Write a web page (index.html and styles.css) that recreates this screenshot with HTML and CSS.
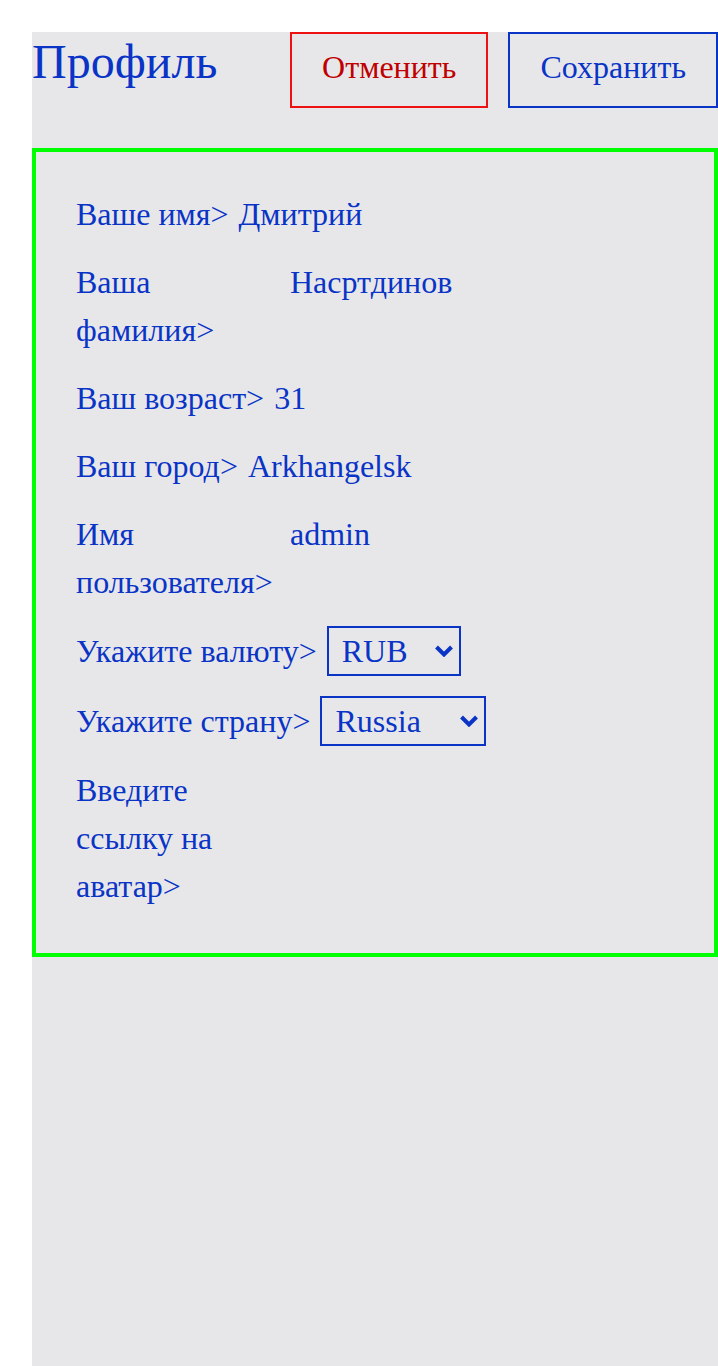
FILE: index.html
```html
<!DOCTYPE html>
<html lang="ru">
<head>
<meta charset="utf-8">
<title>Профиль</title>
<link rel="stylesheet" href="styles.css">
</head>
<body>
<main class="page">
  <header class="header">
    <h1 class="title">Профиль</h1>
    <div class="actions">
      <button class="btn btn-cancel">Отменить</button>
      <button class="btn btn-save">Сохранить</button>
    </div>
  </header>
  <section class="card">
    <div class="row"><span class="label">Ваше имя&gt;</span><span class="value">Дмитрий</span></div>
    <div class="row"><span class="label">Ваша фамилия&gt;</span><span class="value">Насртдинов</span></div>
    <div class="row"><span class="label">Ваш возраст&gt;</span><span class="value">31</span></div>
    <div class="row"><span class="label">Ваш город&gt;</span><span class="value">Arkhangelsk</span></div>
    <div class="row"><span class="label">Имя пользователя&gt;</span><span class="value">admin</span></div>
    <div class="row row-select">
      <span class="label">Укажите валюту&gt;</span>
      <span class="select-wrap">
        <select class="select select-currency"><option>RUB</option></select>
        <svg class="chevron" width="20" height="12" viewBox="0 0 20 12" aria-hidden="true"><polyline points="2.5,2 10,9.5 17.5,2" fill="none" stroke="#0a34c6" stroke-width="4"/></svg>
      </span>
    </div>
    <div class="row row-select">
      <span class="label">Укажите страну&gt;</span>
      <span class="select-wrap">
        <select class="select select-country"><option>Russia</option></select>
        <svg class="chevron" width="20" height="12" viewBox="0 0 20 12" aria-hidden="true"><polyline points="2.5,2 10,9.5 17.5,2" fill="none" stroke="#0a34c6" stroke-width="4"/></svg>
      </span>
    </div>
    <div class="row"><span class="label">Введите ссылку на аватар&gt;</span><span class="value"></span></div>
  </section>
</main>
</body>
</html>
```
FILE: styles.css
```css
html, body {
  margin: 0;
  padding: 0;
  background: #ffffff;
}
body {
  padding: 32px 0 0 32px;
  font-family: "Liberation Serif", "Times New Roman", serif;
  color: #0a34c6;
}
.page {
  background: #e7e7ea;
  min-height: 1334px;
  box-sizing: border-box;
}
.header {
  display: flex;
  justify-content: space-between;
  align-items: flex-start;
  height: 76px;
}
.title {
  margin: 0;
  font-size: 48px;
  font-weight: normal;
  line-height: 60px;
  color: #0a34c6;
}
.actions {
  display: flex;
  gap: 20px;
}
.btn {
  height: 76px;
  box-sizing: border-box;
  padding: 0 30px 6px;
  background: transparent;
  font-family: "Liberation Serif", "Times New Roman", serif;
  font-size: 32px;
  cursor: pointer;
}
.btn-cancel {
  border: 2px solid #ee1111;
  color: #c00000;
}
.btn-save {
  border: 2px solid #0a34c6;
  color: #0a34c6;
}
.card {
  margin-top: 40px;
  border: 4px solid #00ff00;
  padding: 38px 40px 43px;
  display: flex;
  flex-direction: column;
  gap: 20px;
}
.row {
  display: flex;
  align-items: flex-start;
  gap: 10px;
  font-size: 32px;
  line-height: 48px;
}
.label {
  flex: 0 1 auto;
}
.value {
  flex: 0 0 384px;
}
.row-select {
  align-items: center;
  height: 50px;
}
.select-wrap {
  position: relative;
  display: flex;
  flex: 0 0 auto;
}
.select {
  appearance: none;
  -webkit-appearance: none;
  font-family: "Liberation Serif", "Times New Roman", serif;
  font-size: 32px;
  line-height: 46px;
  color: #0a34c6;
  background: transparent;
  border: 2px solid #0a34c6;
  border-radius: 0;
  height: 50px;
  padding: 0 30px 0 13px;
  margin: 0;
}
.select-currency {
  width: 134px;
}
.select-country {
  width: 166px;
}
.chevron {
  position: absolute;
  right: 7px;
  top: 19px;
  pointer-events: none;
}
```
